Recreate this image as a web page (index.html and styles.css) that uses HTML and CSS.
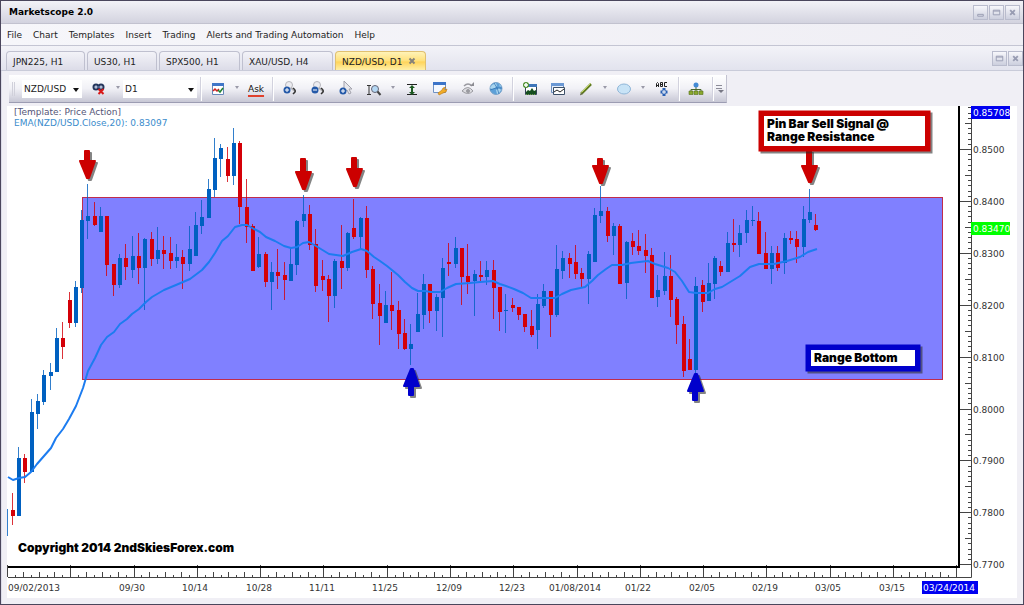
FILE: index.html
```html
<!DOCTYPE html>
<html lang="en">
<head>
<meta charset="utf-8">
<title>Marketscope 2.0</title>
<link rel="stylesheet" href="styles.css">
</head>
<body>
<div class="window">
  <header class="titlebar">
    <h1 class="title">Marketscope 2.0</h1>
    <div class="winbtns">
      <button class="winbtn" aria-label="Minimize"><svg viewBox="0 0 14 14"><path d="M4 9h6v2H4z"/></svg></button>
      <button class="winbtn" aria-label="Maximize"><svg viewBox="0 0 14 14"><path d="M3.500 4.500h7v5h-7zM3.500 5.500h7"/></svg></button>
      <button class="winbtn" aria-label="Close"><svg viewBox="0 0 14 14"><path d="M4.500 4.500l5 5M9.500 4.500l-5 5" stroke-width="2"/></svg></button>
    </div>
  </header>
  <nav class="menubar">
    <button>File</button><button>Chart</button><button>Templates</button><button>Insert</button><button>Trading</button><button>Alerts and Trading Automation</button><button>Help</button>
  </nav>
  <div class="tabbar">
    <div class="tabs">
      <button class="tab tab-jpn">JPN225, H1</button>
      <button class="tab tab-us">US30, H1</button>
      <button class="tab tab-spx">SPX500, H1</button>
      <button class="tab tab-xau">XAU/USD, H4</button>
      <button class="tab tab-active">NZD/USD, D1 <svg class="tabclose" viewBox="0 0 8 8"><path d="M1.500 1.500l5 5M6.500 1.500l-5 5"/></svg></button>
    </div>
    <div class="winbtns">
      <button class="winbtn" aria-label="Restore chart"><svg viewBox="0 0 14 14"><path d="M3.500 4.500h7v5h-7zM3.500 5.500h7"/></svg></button>
      <button class="winbtn" aria-label="Close chart"><svg viewBox="0 0 14 14"><path d="M4.500 4.500l5 5M9.500 4.500l-5 5" stroke-width="2"/></svg></button>
    </div>
  </div>
  <main class="workspace">
    <div class="toolbar">
      <span class="grip"></span>
      <span class="combo combo-symbol"><select aria-label="Symbol"><option>NZD/USD</option></select></span>
      <button class="tool" aria-label="Unlink"><svg viewBox="0 0 16 16"><g fill="none" stroke="#24365c" stroke-width="2"><circle cx="5" cy="6" r="2.500"/><circle cx="10" cy="6" r="2.500"/></g><path d="M4 6h7" stroke="#6a86b8"/><path d="M7.500 8l5 5M12.500 8l-5 5" stroke="#d81818" stroke-width="2"/></svg></button>
      <button class="caret" aria-label="Link options"></button>
      <span class="combo combo-period"><select aria-label="Period"><option>D1</option></select></span>
      <span class="sep"></span>
      <button class="tool" aria-label="Chart type"><svg viewBox="0 0 16 16"><path d="M2.500 2.500h11v11h-11z" fill="#fff" stroke="#6688b8"/><path d="M2 2h12v3H2z" fill="#3f76c8"/><path d="M3 10l2-2 2 2 2-2" fill="none" stroke="#d02020" stroke-width="1.500"/><path d="M8 9l2 2 3-4" fill="none" stroke="#208030" stroke-width="1.500"/></svg></button>
      <button class="caret" aria-label="Chart type options"></button>
      <button class="tool ask">Ask</button>
      <span class="sep"></span>
      <button class="tool" aria-label="Zoom in"><svg viewBox="0 0 16 16"><circle cx="7" cy="4" r="3.500" fill="#ececf0" stroke="#b6b6bc"/><path d="M9 7l4 3" stroke="#b0b0b4" stroke-width="2"/><path d="M11 7q3 2 2 4l-2 2" fill="none" stroke="#333" stroke-width="1.500"/><circle cx="5" cy="9" r="3.500" fill="#2459a8"/><path d="M5 7v4M3 9h4" stroke="#fff"/></svg></button>
      <button class="tool" aria-label="Zoom out"><svg viewBox="0 0 16 16"><circle cx="7" cy="4" r="3.500" fill="#ececf0" stroke="#b6b6bc"/><path d="M9 7l4 3" stroke="#b0b0b4" stroke-width="2"/><path d="M11 7q3 2 2 4l-2 2" fill="none" stroke="#333" stroke-width="1.500"/><circle cx="5" cy="9" r="3.500" fill="#2459a8"/><path d="M3 9h4" stroke="#fff"/></svg></button>
      <button class="tool" aria-label="Pointer"><svg viewBox="0 0 16 16"><path d="M6 0v11l3-2 2 4 2-1-2-4h3z" fill="#e8e8ec" stroke="#a2a2ac"/><circle cx="5" cy="10" r="3.500" fill="#2459a8"/><path d="M5 8v4M3 10h4" stroke="#fff"/></svg></button>
      <button class="tool" aria-label="Scale zoom"><svg viewBox="0 0 16 16"><path d="M1 4.500h4M1 13.500h4M3 4v10" stroke="#333"/><circle cx="9" cy="8" r="3.500" fill="#b5d8f4" stroke="#667"/><path d="M11.500 10.500l3 3.500" stroke="#444" stroke-width="2"/></svg></button>
      <button class="caret" aria-label="Scale options"></button>
      <button class="tool" aria-label="Fit height"><svg viewBox="0 0 16 16"><path d="M3 3.500h10M3 13.500h10" stroke="#222"/><path d="M8 4l3 3H9v4h2l-3 3-3-3h2V7H5z" fill="#1d5a22"/></svg></button>
      <button class="tool" aria-label="Chart properties"><svg viewBox="0 0 16 16"><path d="M1.500 1.500h12v10h-12z" fill="#f4f8ff" stroke="#6f92c4"/><path d="M1 1h13v3H1z" fill="#3c74c8"/><path d="M14 6l-3 1-1 2-4 3 1 2 4-2 3-1 1-3-2 1-1-1z" fill="#f0ac28" stroke="#b87410" stroke-width=".6"/></svg></button>
      <button class="tool" aria-label="Hide"><svg viewBox="0 0 16 16" fill="none" stroke="#9a9aa0"><path d="M2 10q6-7 11 0-5 5-11 0z" fill="#dcdce0"/><circle cx="8" cy="10" r="1.500" fill="#9a9aa0"/><path d="M4 5q4-4 8 0" stroke-width="1.500"/><path d="M10 5h4V1z" fill="#8c8c92" stroke="none"/></svg></button>
      <button class="tool" aria-label="Web"><svg viewBox="0 0 16 16"><circle cx="8" cy="7.500" r="6" fill="#5da0d8" stroke="#7aa4ca"/><path d="M4 4l4-2 1 3-2 2-3 1-2-1zM8 9l3-2 2 2-2 3-2 1zM11 3l2 2-1 1z" fill="#a9d5ef"/><path d="M6 2q4 5 5 11M2 9q6-3 12-2" fill="none" stroke="#2c6fb0" stroke-width=".7"/></svg></button>
      <span class="sep"></span>
      <button class="tool" aria-label="Add indicator"><svg viewBox="0 0 16 16"><path d="M3.500 3.500h11v10h-11z" fill="#fff" stroke="#345"/><path d="M3 3h12v3H3z" fill="#3e76ba"/><path d="M4 13v-2l2-2 2 1 2-3 2 3 2-1v4z" fill="#164f20"/><path d="M4 13.500h10" stroke="#68a83c" stroke-dasharray="1 1"/><circle cx="4" cy="4" r="3" fill="#4d902e"/><path d="M4 2v4M2 4h4" stroke="#fff" stroke-width="1.500"/></svg></button>
      <button class="tool" aria-label="Add chart"><svg viewBox="0 0 16 16"><path d="M1.500 2.500h12v9h-12z" fill="#e8f0fc" stroke="#6b8fc0"/><path d="M1 2h13v3H1z" fill="#6a98d4"/><path d="M3.500 6.500h11v7h-11z" fill="#fff" stroke="#3c5068"/><path d="M4 11l3-2 3 2 4-3" fill="none" stroke="#222"/></svg></button>
      <button class="tool" aria-label="Line"><svg viewBox="0 0 16 16"><path d="M3 13L13 3" stroke="#617c22" stroke-width="2.500"/><path d="M3.500 11.500l9-9" stroke="#c5d766"/><path d="M2 14l3-2" stroke="#665"/></svg></button>
      <button class="caret" aria-label="Line options"></button>
      <button class="tool" aria-label="Ellipse"><svg viewBox="0 0 16 16"><ellipse cx="8" cy="8" rx="6.500" ry="5" fill="#c8e3f6" stroke="#8fb6d8"/></svg></button>
      <button class="caret" aria-label="Shape options"></button>
      <button class="tool" aria-label="Text label"><svg viewBox="0 0 16 16"><g fill="none" stroke="#222"><path d="M2.500 6V2.500l1-1 1 1V6M2.500 4.500h2M6.500 1.500v4h2v-4zM6.500 3.500h2M13 1.500h-2.500v4H13"/></g><path d="M10 7v8M6.500 11h7" stroke="#2860b4" stroke-width="3"/><path d="M10 9v4M8 11h4" stroke="#fff"/></svg></button>
      <span class="sep"></span>
      <button class="tool" aria-label="Hierarchy"><svg viewBox="0 0 16 16"><path d="M8 5v4M3 11V8.500h10V11M8 8v3" fill="none" stroke="#4b672c"/><circle cx="8" cy="4" r="2.500" fill="#438ad4"/><g fill="#8aa82e" stroke="#55701c" stroke-width=".6"><path d="M1 10h4v3.500H1zM6 10h4v3.500H6zM11 10h4v3.500h-4z"/></g></svg></button>
      <span class="sep"></span>
      <button class="more" aria-label="More tools"><svg viewBox="0 0 8 10"><path d="M0 1.500h6M0 4.500h6" stroke="#8c8c98"/><path d="M2 6h6L5 9z" fill="#777784"/></svg></button>
    </div>
    <svg class="chart" id="chart" viewBox="7 106 1010 492" role="img" aria-label="NZD/USD daily candlestick chart"></svg>
  </main>
</div>
<script src="chart.js"></script>
</body>
</html>
```
FILE: styles.css
```css
* { box-sizing: border-box; }

body {
  margin: 0;
  background: #f0eff5;
  color: #222;
  font: 9px/14px "DejaVu Sans", sans-serif;
}

button, select {
  margin: 0;
  padding: 0;
  border: 0;
  background: none;
  color: inherit;
  font: inherit;
}

.window {
  min-height: 100vh;
  border: 1px solid #4a465c;
}

.titlebar {
  display: flex;
  align-items: center;
  justify-content: space-between;
  height: 23px;
  padding: 0 3px 0 8px;
  border-bottom: 1px solid #c2c2cf;
  background: linear-gradient(#f2f2f7, #d3d3df);
}

.title {
  margin: 0;
  color: #000;
  font: bold 9px/14px "DejaVu Sans", sans-serif;
}

.winbtns { display: flex; gap: 1px; }

.winbtn {
  width: 15px;
  height: 15px;
  border: 1px solid #b9bccd;
  background: linear-gradient(#f7f7fb, #cccfde);
}

.winbtn svg {
  display: block;
  width: 13px;
  height: 13px;
  fill: none;
  stroke: #989cb2;
}

.menubar {
  display: flex;
  align-items: center;
  gap: 11px;
  height: 22px;
  padding: 0 6px;
  border-bottom: 1px solid #c4c5d3;
  background: linear-gradient(90deg, #f6f6fa, #efeef4);
}

.tabbar {
  display: flex;
  align-items: center;
  justify-content: space-between;
  height: 25px;
  padding-left: 5px;
  border-bottom: 1px solid #c9cbd9;
  background: linear-gradient(#f3f3f8, #e2e3ee);
}

.tabs { display: flex; gap: 2px; align-self: flex-end; }

.tab {
  height: 19px;
  padding: 2px 6px 0;
  border: 1px solid #bfc0cf;
  border-bottom: 0;
  border-radius: 4px 4px 0 0;
  background: linear-gradient(#f3f3f8, #dcdce8);
  text-align: left;
  white-space: nowrap;
}

.tab-jpn { width: 79px; }
.tab-us { width: 70px; }
.tab-spx { width: 81px; }
.tab-xau { width: 91px; }

.tab-active {
  width: 91px;
  border-color: #e0c070;
  background: linear-gradient(#fff3b8, #ffe07a 50%, #ffd45a 55%, #fff0a8);
}

.tabclose {
  width: 8px;
  height: 8px;
  margin-left: 3px;
  stroke: #85827a;
  stroke-width: 2;
}

.workspace { padding: 4px 6px 6px 5px; border-left: 1px solid #dcdce8; }

.toolbar {
  display: flex;
  align-items: center;
  width: max-content;
  height: 28px;
  margin: 0 0 3px 2px;
  border-right: 1px solid #c2c2d0;
  border-bottom: 1px solid #9c9cb2;
  background: linear-gradient(#fff, #f1f1f6 50%, #c7c7d5);
}

.grip {
  width: 3px;
  height: 14px;
  margin: 0 7px 0 3px;
  border-left: 1px solid #d0d0da;
  border-right: 1px solid #d0d0da;
}

.combo { position: relative; background: #fff; height: 18px; }
.combo-symbol { width: 60px; margin-right: 3px; }
.combo-period { width: 74px; margin: 0 1px 0 0; }

.combo select {
  width: 100%;
  height: 18px;
  padding-left: 2px;
  appearance: none;
}

.combo::after {
  content: "";
  position: absolute;
  right: 3px;
  top: 8px;
  border: 3px solid transparent;
  border-top: 4px solid #111;
  pointer-events: none;
}

.tool {
  display: flex;
  flex: none;
  align-items: center;
  justify-content: center;
  width: 28px;
  height: 24px;
}

.tool svg { width: 16px; height: 16px; }

.ask {
  color: #111;
  text-decoration: underline 2px #e0402c;
  text-underline-offset: 3px;
}

.caret { display: flex; justify-content: center; width: 10px; }

.caret::after {
  content: "";
  border: 2px solid transparent;
  border-top: 3px solid #9a9aa8;
}

.sep {
  width: 6px;
  height: 24px;
  background: linear-gradient(90deg, transparent 2px, #d2d2de 2px, #d2d2de 3px, #fff 3px, #fff 4px, transparent 4px);
}

.more { width: 10px; height: 24px; }
.more svg { display: block; width: 8px; height: 10px; }

.chart {
  display: block;
  width: 100%;
  height: auto;
  background: #fff;
  font-size: 9px;
}

.axis-text { fill: #333; }
.axis-heavy { fill: none; stroke: #000; stroke-width: 2; }
.axis-thin { fill: none; stroke: #444; }
.range { fill: #8080ff; stroke: #c02c4c; }
.up { fill: #0060c0; stroke: #0060c0; }
.down { fill: #d40008; stroke: #d40008; }
.wick { stroke-width: 1; opacity: .8; }
.body { stroke: none; }
.ema { fill: none; stroke: #1c7cf0; stroke-width: 2; stroke-linejoin: round; }
.template-name { fill: #555577; }
.ema-name { fill: #3a8ccc; }
.note { fill: #000; font: 900 12px Inter, sans-serif; }
.red { fill: #cc0000; stroke: #cc0000; }
.blue { fill: #0000cc; stroke: #0000cc; }
.shadow { fill: #333; stroke: #333; opacity: .6; }
.arrow { stroke-width: 2; stroke-linejoin: round; }
.paper { fill: #fff; }
.price-high { fill: #0000f0; }
.price-last { fill: #00ff00; }
.tag-text { fill: #fff; }
```
FILE: chart.js
```js
const svg = document.getElementById("chart");

function add(tag, cls, attrs, text) {
  const el = document.createElementNS("http://www.w3.org/2000/svg", tag);
  if (cls) el.setAttribute("class", cls);
  for (const k in attrs) el.setAttribute(k, attrs[k]);
  if (text) el.textContent = text;
  svg.appendChild(el);
  return el;
}

/* Each candle: direction, high, body top, body bottom, low */
const candles = `u 509 509 509 536
d 493 510 516 525
u 447 458 516 516
d 454 458 472 483
u 399 412 472 472
u 394 401 414 429
u 370 375 402 405
u 363 372 376 390
u 328 338 372 372
d 322 338 347 359
d 292 300 323 328
u 281 287 323 327
u 210 220 288 293
u 184 216 221 239
d 202 216 225 226
u 207 216 232 232
d 216 216 265 276
d 264 264 285 296
u 254 258 285 288
d 244 258 267 280
u 236 256 270 278
d 233 256 268 284
u 238 239 268 310
d 232 239 259 266
u 227 250 259 264
d 236 250 254 269
d 237 253 261 269
u 244 257 261 268
d 250 257 264 289
u 226 249 264 271
u 212 225 256 256
u 200 217 226 234
u 179 189 218 218
u 138 158 190 197
u 144 148 159 177
d 147 159 176 182
u 128 143 176 185
d 141 143 207 224
d 179 207 227 243
d 224 226 271 271
u 237 254 267 268
d 252 254 282 287
u 262 272 282 310
d 249 272 276 289
d 262 275 280 300
u 248 264 281 281
u 220 221 265 275
u 195 214 221 227
d 205 214 245 250
d 229 244 286 292
d 260 276 280 291
d 275 279 296 322
u 259 261 296 308
d 225 261 268 289
u 232 233 268 271
d 199 228 237 239
u 217 218 237 249
d 206 218 270 278
d 266 269 304 319
d 284 303 316 345
u 291 305 323 323
d 272 305 311 330
d 301 310 334 349
d 319 333 349 350
u 324 344 349 365
u 293 314 332 332
u 274 284 315 329
d 284 284 311 323
u 294 297 311 331
u 258 268 298 337
d 243 262 264 276
u 237 248 264 268
d 248 248 277 305
d 244 276 282 294
u 270 274 281 316
d 261 275 277 281
u 261 270 277 285
d 260 270 288 319
d 287 287 312 331
u 294 310 311 333
d 298 305 308 312
d 307 307 315 320
d 314 314 327 332
d 310 326 335 337
u 294 304 330 349
u 284 291 306 308
d 291 291 315 337
u 245 269 315 317
u 251 258 271 279
d 253 258 264 278
d 245 262 274 279
d 268 273 279 287
u 251 254 279 304
u 208 215 262 262
u 186 211 216 223
d 207 211 236 242
u 223 226 236 255
d 224 226 284 284
u 241 242 283 299
d 233 241 247 255
d 230 246 251 255
d 234 250 256 273
d 248 255 298 298
u 275 290 297 307
u 252 276 291 295
d 255 276 300 317
d 297 299 325 344
d 316 324 371 377
d 339 359 370 370
u 277 286 370 374
d 280 285 302 312
u 263 283 301 301
u 256 258 284 299
d 261 266 272 276
u 232 243 272 272
d 219 243 245 252
u 225 233 245 257
u 210 220 233 243
u 206 220 221 226
d 212 221 254 254
d 232 253 269 269
u 246 253 269 284
d 246 253 268 271
u 233 238 263 274
d 231 238 240 244
d 231 239 247 263
u 206 219 247 257
u 189 212 220 223
d 214 225 230 231`.split("\n").map(line => line.split(" "));

const ema = "8,477 13,480 19,478 25,477 31,472 37,464 44,456 51,448 56,438 63,429 69,419 76,406 83,388 88,371 95,358 101,345 107,337 114,332 120,324 127,319 132,314 139,309 146,302 152,297 164,290 176,285 190,279 202,270 209,262 215,253 222,241 228,236 235,227 242,225 247,225 254,229 260,232 266,237 275,241 284,246 291,248 297,247 303,243 309,242 316,246 329,254 336,255 343,256 352,252 361,249 367,251 374,257 380,261 387,266 398,275 405,282 412,288 418,291 425,291 431,292 440,292 447,288 456,284 470,283 480,282 493,281 500,284 506,286 514,289 523,293 531,298 545,298 555,298 562,294 571,290 585,287 592,281 598,275 606,269 612,265 622,265 631,263 639,262 648,261 655,264 668,268 675,272 682,281 689,292 696,293 708,293 715,289 722,287 740,276 750,267 759,264 774,264 787,261 800,257 808,252 817,249";

add("rect", "range", { x: 82.5, y: 197.5, width: 860, height: 182 });

candles.forEach(([dir, high, top, bottom, low], i) => {
  const x = Math.max(8, Math.round(6.2 + i * 6.33));
  const cls = dir === "u" ? "up" : "down";
  add("path", cls + " wick", { d: `M${x - 0.5} ${high}V${low}` });
  add("rect", cls + " body", { x: x - 2, y: top, width: 4, height: bottom - top });
});
add("polyline", "ema", { points: ema });

/* Price axis */
let thin = "M971.500 106V577.500H8";
for (let n = -8; n <= 80; n++) {
  const y = Math.round(149 + n * 5.19) + 0.5;
  const start = n % 10 === 0 ? 960 : n % 5 === 0 ? 965 : 968;
  if (y > 107) thin += `M${start} ${y}H971`;
}
for (let n = 0; n <= 8; n++) {
  const y = Math.round(149 + n * 51.9);
  add("text", "axis-text", { x: 973, y: y + 4 }, (0.85 - n * 0.01).toFixed(4));
}

/* Date axis */
for (let n = 0; n <= 120; n++) {
  const x = Math.round(7 + n * 7.91) + 0.5;
  const top = n % 8 === 0 ? 565 : n % 2 === 0 ? 572 : 575;
  thin += `M${x} ${top}V577`;
}
add("path", "axis-thin", { d: thin });
add("path", "axis-heavy", { d: "M8 567H959V106" });
add("text", "axis-text", { x: 8, y: 591 }, "09/02/2013");
["09/30", "10/14", "10/28", "11/11", "11/25", "12/09", "12/23", "01/08/2014", "01/22", "02/05", "02/19", "03/05", "03/15"].forEach((label, i) => {
  add("text", "axis-text", { x: Math.round(132 + i * 63.3), y: 591, "text-anchor": "middle" }, label);
});

function tag(cls, x, y, w, h, tx, text) {
  add("rect", cls, { x: x, y: y, width: w, height: h });
  add("text", "tag-text", { x: tx, y: y + 10 }, text);
}
tag("price-high", 971, 106, 39, 13, 973, "0.85708");
tag("price-last", 971, 222, 39, 13, 973, "0.83470");
tag("price-high", 922, 581, 56, 13, 923, "03/24/2014");

add("text", "template-name", { x: 14, y: 115 }, "[Template: Price Action]");
add("text", "ema-name", { x: 14, y: 126 }, "EMA(NZD/USD.Close,20): 0.83097");
add("text", "note", { x: 18, y: 552 }, "Copyright 2014 2ndSkiesForex.com");

/* Arrow with its tip at (x, tip), head base at y = base and shaft end at y = end */
function arrow(cls, x, tip, base, end) {
  const s = Math.sign(tip - base);
  const d = `M${x - 1} ${tip - s}L${x - 8} ${base + s}H${x - 3}V${end + s}H${x + 1}V${base + s}H${x + 7}L${x + 1} ${tip - s}Z`;
  add("path", "shadow arrow", { d: d, transform: "translate(2 2)" });
  add("path", cls + " arrow", { d: d });
}
arrow("red", 88, 179, 160, 150);
arrow("red", 304, 190, 171, 158);
arrow("red", 355, 187, 168, 157);
arrow("red", 601, 184, 165, 158);
arrow("blue", 412, 368, 387, 396);
arrow("blue", 696, 373, 392, 401);

function callout(cls, x, y, w, h, lines) {
  add("rect", "shadow", { x: x + 2, y: y + 2, width: w, height: h });
  add("rect", cls, { x: x, y: y, width: w, height: h });
  add("rect", "paper", { x: x + 5, y: y + 5, width: w - 10, height: h - 10 });
  lines.forEach((line, i) => add("text", "note", { x: x + 8, y: y + 17 + i * 13 }, line));
}
arrow("red", 810, 183, 165, 150);
callout("red", 759, 111, 171, 40, ["Pin Bar Sell Signal @", "Range Resistance"]);
callout("blue", 806, 345, 114, 26, ["Range Bottom"]);
```
